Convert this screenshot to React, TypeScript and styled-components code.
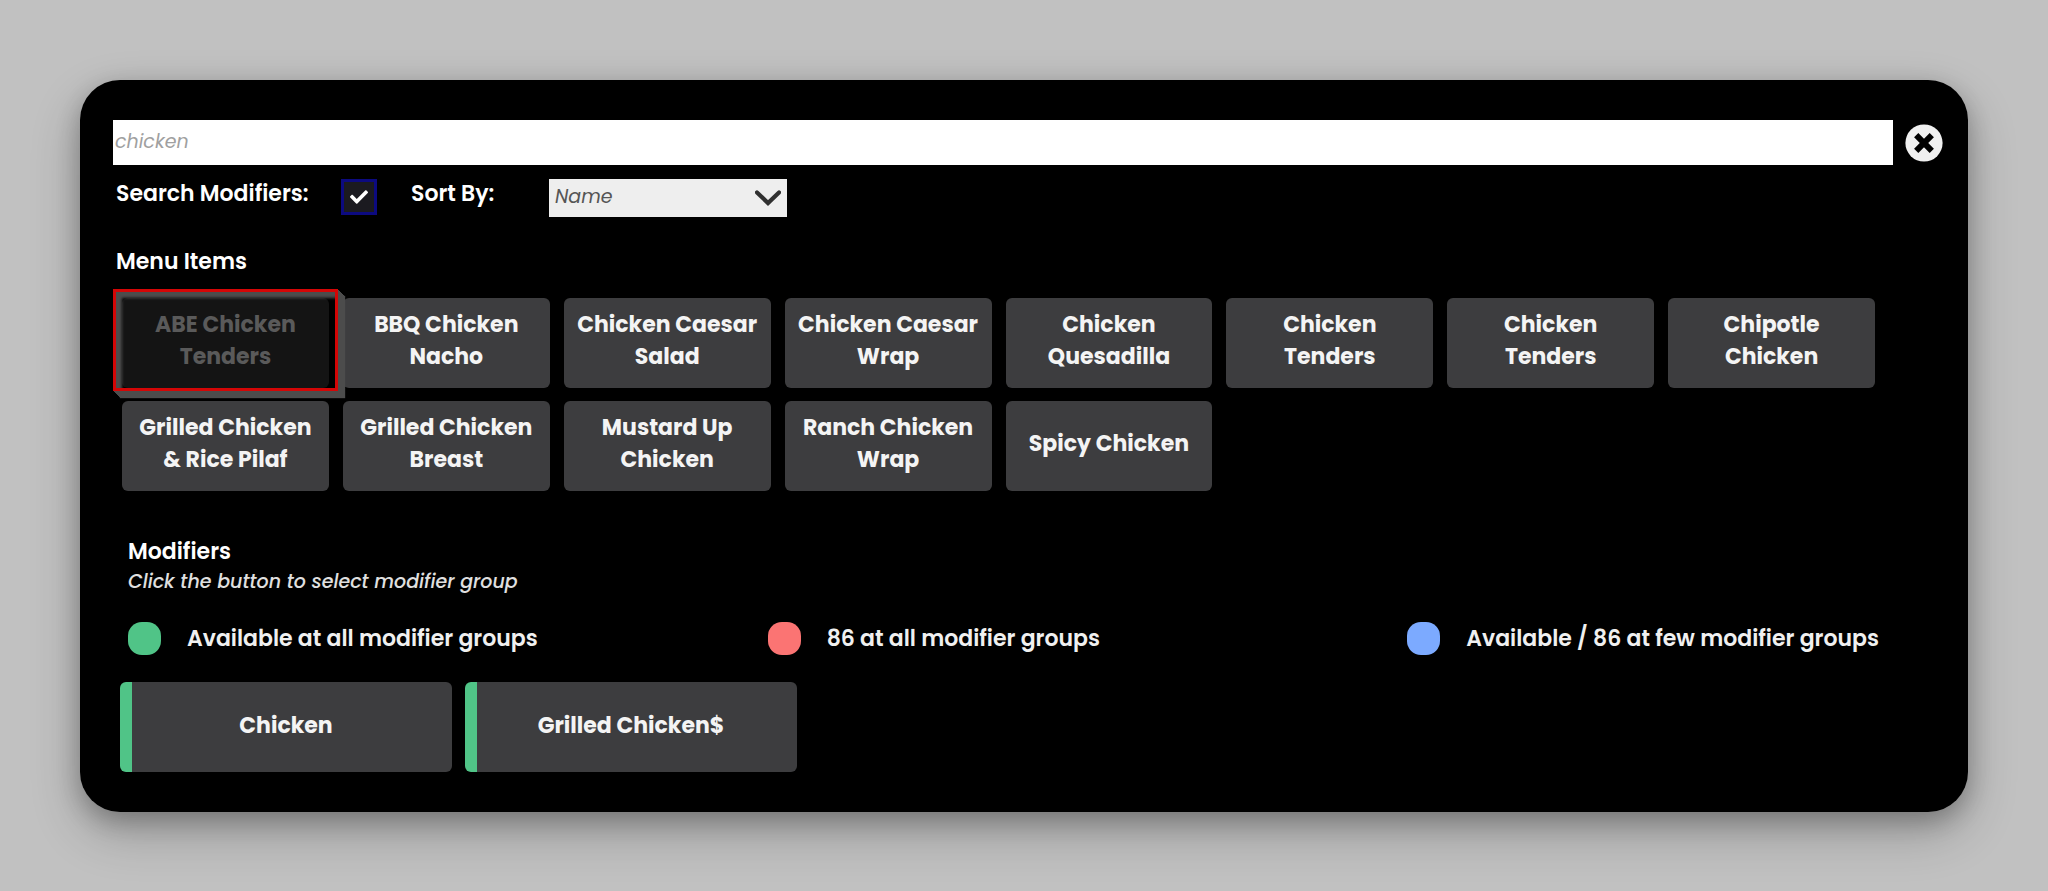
import React, { useState } from "react";
import styled, { createGlobalStyle, css } from "styled-components";
import { FaCheck } from "react-icons/fa";

const GlobalStyle = createGlobalStyle`
  *, *::before, *::after { box-sizing: border-box; }
  body {
    margin: 0;
    background: #c1c1c1;
    color: #fff;
    font-family: Poppins, Inter, "Liberation Sans", sans-serif;
    font-size: 22px;
    line-height: 32px;
  }
  button, input, select { font: inherit; }
`;

const Page = styled.main`
  padding: 80px;
`;

const Panel = styled.section`
  background: #000;
  border-radius: 40px;
  padding: 40px 25px 40px 33px;
  box-shadow: 0 20px 50px rgba(0, 0, 0, 0.24), 0 8px 24px rgba(0, 0, 0, 0.24);
`;

const SearchRow = styled.div`
  display: flex;
  align-items: center;
  gap: 12px;
`;

const SearchInput = styled.input`
  flex: 1;
  min-width: 0;
  height: 45px;
  padding: 0 2px 3px;
  border: 0;
  border-radius: 0;
  background: #fff;
  color: #a0a0a0;
  font-size: 19px;
  font-style: italic;
  outline: none;
`;

const CloseButton = styled.button`
  display: flex;
  padding: 0;
  border: 0;
  border-radius: 50%;
  background: transparent;
  cursor: pointer;
`;

const FilterRow = styled.div`
  display: flex;
  align-items: flex-start;
  padding: 14px 0 0 3px;
`;

const FilterLabel = styled.label<{ $column: number }>`
  flex: 0 0 ${({ $column }) => $column}px;
  line-height: 30px;
  font-weight: 600;
`;

const CheckWrap = styled.span`
  display: grid;
  place-items: center;
  width: 36px;
  height: 36px;
  margin-right: 34px;
  > * { grid-area: 1 / 1; }
  svg { pointer-events: none; }
`;

const CheckInput = styled.input`
  appearance: none;
  width: 36px;
  height: 36px;
  margin: 0;
  border: 3px solid #0c0a80;
  background: #1b1a20;
`;

const SelectWrap = styled.span`
  display: grid;
  align-items: center;
  width: 238px;
  > * { grid-area: 1 / 1; }
  svg { justify-self: end; margin-right: 6px; pointer-events: none; }
`;

const SortSelect = styled.select`
  appearance: none;
  width: 100%;
  height: 38px;
  padding: 0 40px 2px 6px;
  border: 0;
  border-radius: 0;
  background: #eee;
  color: #555;
  font-size: 19px;
  font-style: italic;
`;

const Heading = styled.h2`
  margin: 0;
  font-size: 22px;
  font-weight: 600;
`;

const MenuSection = styled.section`
  padding: 29px 68px 0 9px;
  ${Heading} { margin: 0 0 20px -6px; }
`;

const MenuGrid = styled.div`
  display: grid;
  grid-template-columns: repeat(8, minmax(0, 1fr));
  gap: 13px 14px;
`;

const tile = css`
  height: 90px;
  border: 0;
  border-radius: 6px;
  background: #3d3d3f;
  color: #f4f4f4;
  font-weight: 700;
  text-align: center;
  cursor: pointer;
`;

const MenuTile = styled.button<{ $selected: boolean }>`
  ${tile}
  padding: 0 12px 4px;
  ${({ $selected }) =>
    $selected &&
    css`
      position: relative;
      z-index: 1;
      background: #141414;
      color: #5a5a5a;
      &::before {
        content: "";
        position: absolute;
        inset: -9px -9px -3px;
        border: 3px solid #d40606;
        box-shadow:
          1px 1px #4c4c4c, 2px 2px #4c4c4c, 3px 3px #4c4c4c, 4px 4px #4c4c4c,
          5px 5px #4c4c4c, 6px 6px #4c4c4c, 7px 7px 1px #4c4c4c,
          inset 6px 6px 3px #4c4c4c;
      }
    `}
`;

const ModifierSection = styled.section`
  padding: 45px 56px 0 7px;
`;

const ModifierIntro = styled.div`
  padding-left: 8px;
`;

const Hint = styled.p`
  margin: 0;
  color: #e0e0e0;
  font-size: 19px;
  font-style: italic;
  font-weight: 500;
  line-height: 28px;
`;

const Legend = styled.ul`
  display: grid;
  grid-template-columns: 4fr 4fr 3fr;
  margin: 0;
  padding: 26px 0 27px 8px;
  list-style: none;
`;

const LegendItem = styled.li`
  display: flex;
  align-items: center;
  gap: 26px;
  font-weight: 600;
  color: #f0f0f0;
  white-space: nowrap;
`;

const Dot = styled.span<{ $color: string }>`
  flex: none;
  width: 33px;
  height: 33px;
  border-radius: 14px;
  background: ${({ $color }) => $color};
`;

const ModifierRow = styled.div`
  display: flex;
  gap: 13px;
`;

const ModifierTile = styled.button<{ $color: string }>`
  ${tile}
  width: 332px;
  padding: 0 12px 3px 0;
  border-left: 12px solid ${({ $color }) => $color};
`;

const GREEN = "#50c487";

const MENU_ITEMS = [
  "ABE Chicken Tenders",
  "BBQ Chicken Nacho",
  "Chicken Caesar Salad",
  "Chicken Caesar Wrap",
  "Chicken Quesadilla",
  "Chicken Tenders",
  "Chicken Tenders",
  "Chipotle Chicken",
  "Grilled Chicken & Rice Pilaf",
  "Grilled Chicken Breast",
  "Mustard Up Chicken",
  "Ranch Chicken Wrap",
  "Spicy Chicken",
];

const LEGEND = [
  { color: GREEN, label: "Available at all modifier groups" },
  { color: "#fb7473", label: "86 at all modifier groups" },
  { color: "#7caaff", label: "Available / 86 at few modifier groups" },
];

const MODIFIERS = ["Chicken", "Grilled Chicken$"];

export default function App() {
  const [query, setQuery] = useState("chicken");
  const [withModifiers, setWithModifiers] = useState(true);
  const [selected, setSelected] = useState(0);

  return (
    <>
      <GlobalStyle />
      <Page>
        <Panel>
          <SearchRow>
            <SearchInput
              type="text"
              aria-label="Search menu"
              value={query}
              onChange={(e) => setQuery(e.target.value)}
            />
            <CloseButton type="button" aria-label="Close" onClick={() => setQuery("")}>
              <svg width="38" height="38" viewBox="0 0 38 38">
                <circle cx="19" cy="19" r="18.6" fill="#f0f0f0" />
                <path d="M11.200 11.200 26.800 26.800M26.800 11.200 11.200 26.800" stroke="#000" strokeWidth="6" />
              </svg>
            </CloseButton>
          </SearchRow>

          <FilterRow>
            <FilterLabel htmlFor="search-modifiers" $column={225}>Search Modifiers:</FilterLabel>
            <CheckWrap>
              <CheckInput
                id="search-modifiers"
                type="checkbox"
                checked={withModifiers}
                onChange={(e) => setWithModifiers(e.target.checked)}
              />
              {withModifiers && <FaCheck size={18} color="#fff" />}
            </CheckWrap>
            <FilterLabel htmlFor="sort-by" $column={138}>Sort By:</FilterLabel>
            <SelectWrap>
              <SortSelect id="sort-by" defaultValue="name">
                <option value="name">Name</option>
              </SortSelect>
              <svg width="26" height="16" viewBox="0 0 26 16">
                <path d="M2 2.500 13 13 24 2.500" fill="none" stroke="#303030" strokeWidth="4.200" strokeLinecap="round" />
              </svg>
            </SelectWrap>
          </FilterRow>

          <MenuSection>
            <Heading>Menu Items</Heading>
            <MenuGrid>
              {MENU_ITEMS.map((name, i) => (
                <MenuTile key={i} type="button" $selected={i === selected} onClick={() => setSelected(i)}>
                  {name}
                </MenuTile>
              ))}
            </MenuGrid>
          </MenuSection>

          <ModifierSection>
            <ModifierIntro>
              <Heading>Modifiers</Heading>
              <Hint>Click the button to select modifier group</Hint>
            </ModifierIntro>
            <Legend>
              {LEGEND.map(({ color, label }) => (
                <LegendItem key={label}>
                  <Dot $color={color} />
                  {label}
                </LegendItem>
              ))}
            </Legend>
            <ModifierRow>
              {MODIFIERS.map((name) => (
                <ModifierTile key={name} type="button" $color={GREEN}>{name}</ModifierTile>
              ))}
            </ModifierRow>
          </ModifierSection>
        </Panel>
      </Page>
    </>
  );
}
